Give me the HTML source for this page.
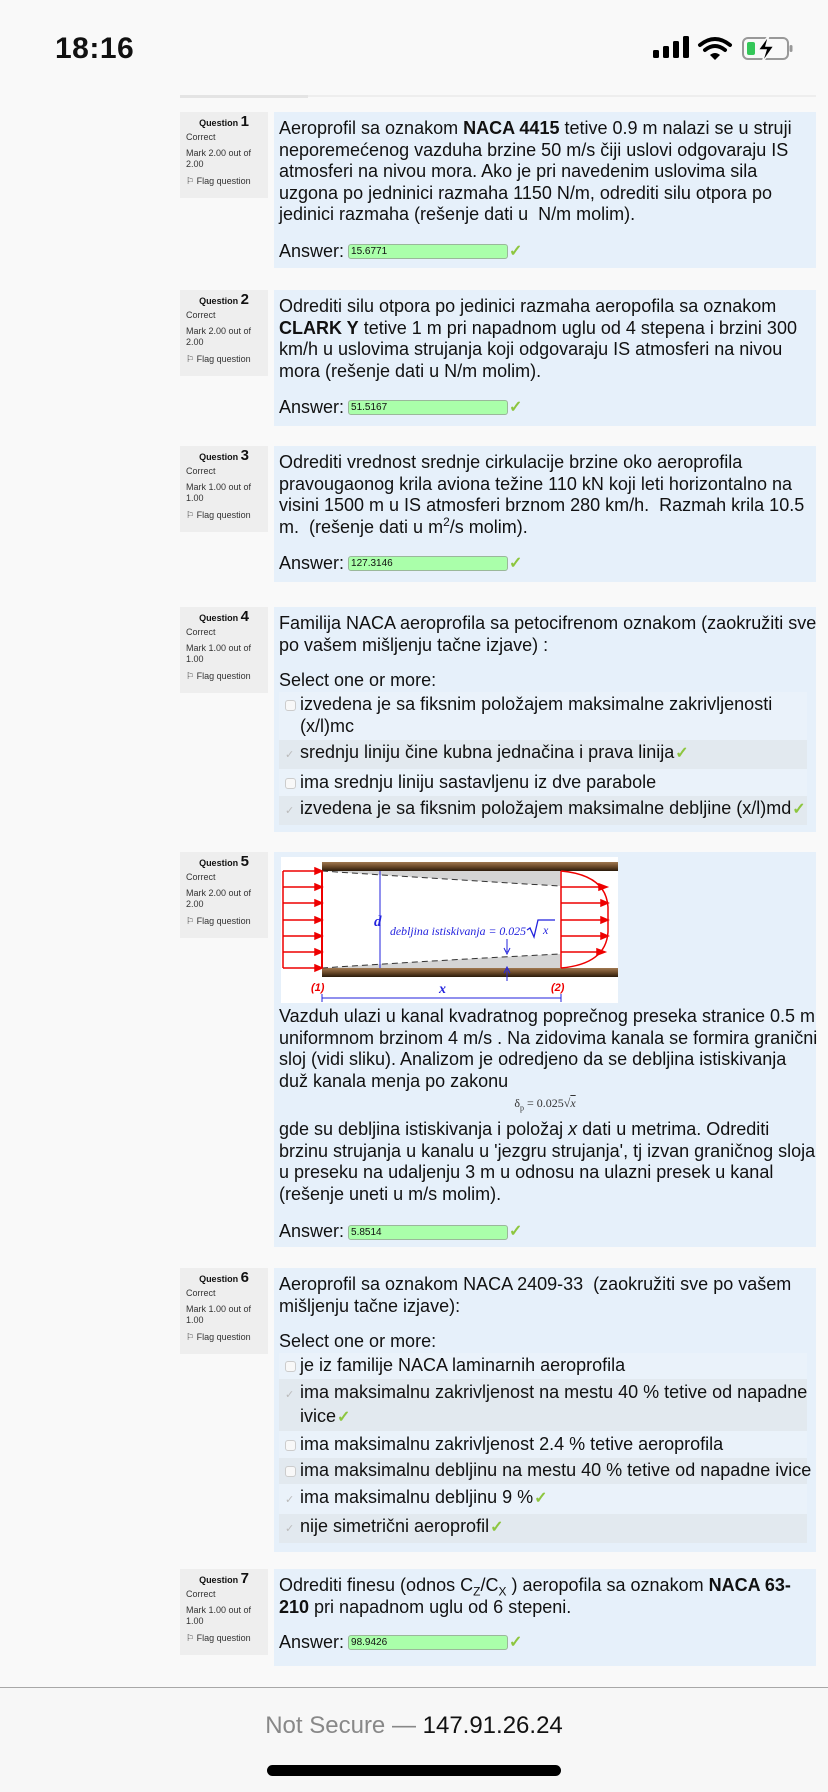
<!DOCTYPE html>
<html><head><meta charset="utf-8">
<style>
*{margin:0;padding:0;box-sizing:border-box}
body{width:828px;height:1792px;background:#f9f9f9;font-family:"Liberation Sans",Arial,sans-serif;color:#111;position:relative;overflow:hidden}
.abs{position:absolute}
.side{position:absolute;left:180px;width:88px;height:86px;background:#eeeeee;padding:4px 0 0 6px;font-size:9px;color:#333;line-height:11px}
.side .qn{text-align:center;font-size:9px;font-weight:bold;color:#111;margin-bottom:3px;margin-left:-6px}
.side .qn b{font-size:15px}
.side p{margin-bottom:5px}
.side .fl{margin-top:6px;padding-left:0}
.q{position:absolute;left:274px;width:542px;background:#e6f0fa;padding:6px 5px 0 5px;font-size:18px;line-height:21.5px;white-space:nowrap}
.ans{display:flex;align-items:center}
.ans .box{display:inline-block;width:160px;height:15px;background:#aaffaa;border:1px solid #9ab89a;border-radius:3px;font-size:10px;line-height:13px;padding-left:2px;margin-left:4px;color:#111}
.ck{color:#8dc63f;font-size:16px;margin-left:1px;font-weight:bold}
.opt{padding:2.5px 0 2.5px 6px;margin-left:0;margin-right:4px}
.o1{background:#eaf2fa}.o2{background:#e2e9ef}
.cb{display:inline-block;width:11px;height:11px;border:1px solid #ccc;border-radius:3px;background:#f8f8f8;margin-right:4px;vertical-align:-1px}
.sc{display:inline-block;width:11px;color:#bbb;font-size:11px;margin-right:4px}
</style></head><body>

<div class="abs" style="left:55px;top:32px;font-size:30px;font-weight:bold;letter-spacing:0.5px">18:16</div>
<svg class="abs" style="left:650px;top:34px" width="150" height="30" viewBox="0 0 150 30">
  <rect x="3" y="16" width="6" height="8" rx="1.5" fill="#000"/>
  <rect x="13" y="12" width="6" height="12" rx="1.5" fill="#000"/>
  <rect x="23" y="7" width="6" height="17" rx="1.5" fill="#000"/>
  <rect x="33" y="2" width="6" height="22" rx="1.5" fill="#000"/>
  <path d="M50 11 Q65 -1 80 11" stroke="#000" stroke-width="4" fill="none" stroke-linecap="round"/>
  <path d="M55 16 Q65 8 75 16" stroke="#000" stroke-width="4" fill="none" stroke-linecap="round"/>
  <path d="M60 21 L65 26 L70 21 Q65 17 60 21Z" fill="#000"/>
  <rect x="93" y="4" width="45" height="21" rx="5" fill="none" stroke="#999" stroke-width="2"/>
  <rect x="139.5" y="11" width="3" height="7" rx="1.5" fill="#999"/>
  <rect x="97" y="8" width="8" height="13" rx="2" fill="#34c759"/>
  <path d="M119 1 L108 16 L116 16 L112 29 L124 12 L116 12 Z" fill="#000" stroke="#f9f9f9" stroke-width="1.5"/>
</svg>

<div class="abs" style="left:180px;top:95px;width:636px;height:2px;background:#eee"></div>
<div class="abs" style="left:180px;top:95px;width:128px;height:3px;background:#e4e4e4"></div>

<div class="side" style="top:112px"><div class="qn">Question <b>1</b></div><p>Correct</p><p>Mark 2.00 out of<br>2.00</p><div class="fl">⚐ Flag question</div></div>
<div class="q" style="top:112px;height:156px">
<div>Aeroprofil sa oznakom <b>NACA 4415</b> tetive 0.9 m nalazi se u struji<br>neporemećenog vazduha brzine 50 m/s čiji uslovi odgovaraju IS<br>atmosferi na nivou mora. Ako je pri navedenim uslovima sila<br>uzgona po jedninici razmaha 1150 N/m, odrediti silu otpora po<br>jedinici razmaha (rešenje dati u&nbsp; N/m molim).</div>
<div class="ans" style="margin-top:15px">Answer: <span class="box">15.6771</span><span class="ck">✓</span></div>
</div>

<div class="side" style="top:290px"><div class="qn">Question <b>2</b></div><p>Correct</p><p>Mark 2.00 out of<br>2.00</p><div class="fl">⚐ Flag question</div></div>
<div class="q" style="top:290px;height:136px">
<div>Odrediti silu otpora po jedinici razmaha aeropofila sa oznakom<br><b>CLARK Y</b> tetive 1 m pri napadnom uglu od 4 stepena i brzini 300<br>km/h u uslovima strujanja koji odgovaraju IS atmosferi na nivou<br>mora (rešenje dati u N/m molim).</div>
<div class="ans" style="margin-top:15px">Answer: <span class="box">51.5167</span><span class="ck">✓</span></div>
</div>

<div class="side" style="top:446px"><div class="qn">Question <b>3</b></div><p>Correct</p><p>Mark 1.00 out of<br>1.00</p><div class="fl">⚐ Flag question</div></div>
<div class="q" style="top:446px;height:136px">
<div>Odrediti vrednost srednje cirkulacije brzine oko aeroprofila<br>pravougaonog krila aviona težine 110 kN koji leti horizontalno na<br>visini 1500 m u IS atmosferi brznom 280 km/h.&nbsp; Razmah krila 10.5<br>m.&nbsp; (rešenje dati u m<sup style="font-size:12px;line-height:0">2</sup>/s molim).</div>
<div class="ans" style="margin-top:15px">Answer: <span class="box">127.3146</span><span class="ck">✓</span></div>
</div>

<div class="side" style="top:607px"><div class="qn">Question <b>4</b></div><p>Correct</p><p>Mark 1.00 out of<br>1.00</p><div class="fl">⚐ Flag question</div></div>
<div class="q" style="top:607px;height:225px">
<div>Familija NACA aeroprofila sa petocifrenom oznakom (zaokružiti sve<br>po vašem mišljenju tačne izjave) :</div>
<div style="margin-top:14px">Select one or more:</div>
<div class="opt o1"><span class="cb"></span>izvedena je sa fiksnim položajem maksimalne zakrivljenosti<br><span style="padding-left:15px">(x/l)mc</span></div>
<div class="opt o2"><span class="sc">✓</span>srednju liniju čine kubna jednačina i prava linija<span class="ck">✓</span></div>
<div class="opt o1"><span class="cb"></span>ima srednju liniju sastavljenu iz dve parabole</div>
<div class="opt o2"><span class="sc">✓</span>izvedena je sa fiksnim položajem maksimalne debljine (x/l)md<span class="ck">✓</span></div>
</div>

<div class="side" style="top:852px"><div class="qn">Question <b>5</b></div><p>Correct</p><p>Mark 2.00 out of<br>2.00</p><div class="fl">⚐ Flag question</div></div>
<div class="q" style="top:852px;height:395px;padding-top:0">
<svg style="display:block;margin:5px 0 0 2px" width="337" height="146" viewBox="0 0 337 146">
  <rect width="337" height="146" fill="#fff"/>
  <defs><linearGradient id="w" x1="0" y1="0" x2="0" y2="1"><stop offset="0" stop-color="#a07850"/><stop offset="0.5" stop-color="#6b4a2a"/><stop offset="1" stop-color="#2a1a0a"/></linearGradient></defs>
  <rect x="41" y="5" width="296" height="9" fill="url(#w)"/>
  <rect x="41" y="111" width="296" height="9" fill="url(#w)"/>
  <path d="M41 14 L279 14 L279 29 Q160 22 41 14Z" fill="#d4d4d4"/>
  <path d="M41 111 L279 111 L279 97 Q160 103 41 111Z" fill="#d4d4d4"/>
  <path d="M41 14 Q160 22 279 29" stroke="#333" stroke-dasharray="6 4" fill="none"/>
  <path d="M41 111 Q160 103 279 97" stroke="#333" stroke-dasharray="6 4" fill="none"/>
  <line x1="41" y1="14" x2="41" y2="111" stroke="#e00" stroke-width="2"/>
  <g stroke="#e00" stroke-width="1.5" fill="#e00">
   <line x1="2" y1="14" x2="2" y2="111"/>
   <path d="M2 14H34M2 30H34M2 46H34M2 63H34M2 79H34M2 95H34M2 111H34"/>
   <path d="M34 11L41 14L34 17ZM34 27L41 30L34 33ZM34 43L41 46L34 49ZM34 60L41 63L34 66ZM34 76L41 79L34 82ZM34 92L41 95L34 98ZM34 108L41 111L34 114Z"/>
   <line x1="280" y1="14" x2="280" y2="111"/>
   <path d="M280 14 Q325 18 327 50 L327 75 Q325 107 280 111" fill="none"/>
   <path d="M280 30H318M280 46H320M280 63H320M280 79H320M280 95H316"/>
   <path d="M318 27L326 30L318 33ZM320 43L327 46L320 49ZM320 60L327 63L320 66ZM320 76L327 79L320 82ZM316 92L324 95L316 98Z"/>
  </g>
  <line x1="99" y1="14" x2="99" y2="111" stroke="#22d" stroke-width="1"/>
  <text x="93" y="69" font-family="Liberation Serif,serif" font-weight="bold" font-style="italic" font-size="15" fill="#22d">d</text>
  <text x="109" y="78" font-family="Liberation Serif,serif" font-style="italic" font-size="11.5" fill="#22d" textLength="136" lengthAdjust="spacingAndGlyphs">debljina istiskivanja = 0.025</text>
  <path d="M246 73 L249 71 L253 80 L257 63 L274 63" stroke="#22d" stroke-width="1.3" fill="none"/>
  <text x="262" y="77" font-family="Liberation Serif,serif" font-style="italic" font-size="12" fill="#22d">x</text>
  <path d="M226 82V95M223 91L226 97L229 91M226 124V112M223 116L226 110L229 116" stroke="#22d" fill="none"/>
  <text x="30" y="134" font-family="Liberation Sans,sans-serif" font-weight="bold" font-style="italic" font-size="11" fill="#e00">(1)</text>
  <text x="270" y="134" font-family="Liberation Sans,sans-serif" font-weight="bold" font-style="italic" font-size="11" fill="#e00">(2)</text>
  <text x="158" y="136" font-family="Liberation Serif,serif" font-weight="bold" font-style="italic" font-size="14" fill="#22d">x</text>
  <path d="M41 141H280M41 137V145M280 137V145" stroke="#22d"/>
</svg>
<div style="margin-top:3px">Vazduh ulazi u kanal kvadratnog poprečnog preseka stranice 0.5 m<br>uniformnom brzinom 4 m/s . Na zidovima kanala se formira granični<br>sloj (vidi sliku). Analizom je odredjeno da se debljina istiskivanja<br>duž kanala menja po zakonu</div>
<div style="text-align:center;font-family:'Liberation Serif',serif;font-size:12px;line-height:22px;color:#333">δ<sub style="font-size:8px">p</sub> = 0.025√<span style="text-decoration:overline;font-style:italic">x</span></div>
<div>gde su debljina istiskivanja i položaj <i>x</i> dati u metrima. Odrediti<br>brzinu strujanja u kanalu u 'jezgru strujanja', tj izvan graničnog sloja<br>u preseku na udaljenju 3 m u odnosu na ulazni presek u kanal<br>(rešenje uneti u m/s molim).</div>
<div class="ans" style="margin-top:16px">Answer: <span class="box">5.8514</span><span class="ck">✓</span></div>
</div>

<div class="side" style="top:1268px"><div class="qn">Question <b>6</b></div><p>Correct</p><p>Mark 1.00 out of<br>1.00</p><div class="fl">⚐ Flag question</div></div>
<div class="q" style="top:1268px;height:284px">
<div>Aeroprofil sa oznakom NACA 2409-33&nbsp; (zaokružiti sve po vašem<br>mišljenju tačne izjave):</div>
<div style="margin-top:14px">Select one or more:</div>
<div class="opt o1"><span class="cb"></span>je iz familije NACA laminarnih aeroprofila</div>
<div class="opt o2"><span class="sc">✓</span>ima maksimalnu zakrivljenost na mestu 40 % tetive od napadne<br><span style="padding-left:15px">ivice</span><span class="ck">✓</span></div>
<div class="opt o1"><span class="cb"></span>ima maksimalnu zakrivljenost 2.4 % tetive aeroprofila</div>
<div class="opt o2"><span class="cb"></span>ima maksimalnu debljinu na mestu 40 % tetive od napadne ivice</div>
<div class="opt o1"><span class="sc">✓</span>ima maksimalnu debljinu 9 %<span class="ck">✓</span></div>
<div class="opt o2"><span class="sc">✓</span>nije simetrični aeroprofil<span class="ck">✓</span></div>
</div>

<div class="side" style="top:1569px"><div class="qn">Question <b>7</b></div><p>Correct</p><p>Mark 1.00 out of<br>1.00</p><div class="fl">⚐ Flag question</div></div>
<div class="q" style="top:1569px;height:97px">
<div>Odrediti finesu (odnos C<sub style="font-size:12px;line-height:0">Z</sub>/C<sub style="font-size:12px;line-height:0">X</sub> ) aeropofila sa oznakom <b>NACA 63-</b><br><b>210</b> pri napadnom uglu od 6 stepeni.</div>
<div class="ans" style="margin-top:14px">Answer: <span class="box">98.9426</span><span class="ck">✓</span></div>
</div>

<div class="abs" style="left:0;top:1687px;width:828px;height:105px;background:#f7f7f7;border-top:1px solid #a8a8a8"></div>
<div class="abs" style="left:0;top:1712px;width:828px;text-align:center;font-size:24px;color:#888">Not Secure — <span style="color:#111">147.91.26.24</span></div>
<div class="abs" style="left:267px;top:1765px;width:294px;height:11px;border-radius:6px;background:#000"></div>
</body></html>
